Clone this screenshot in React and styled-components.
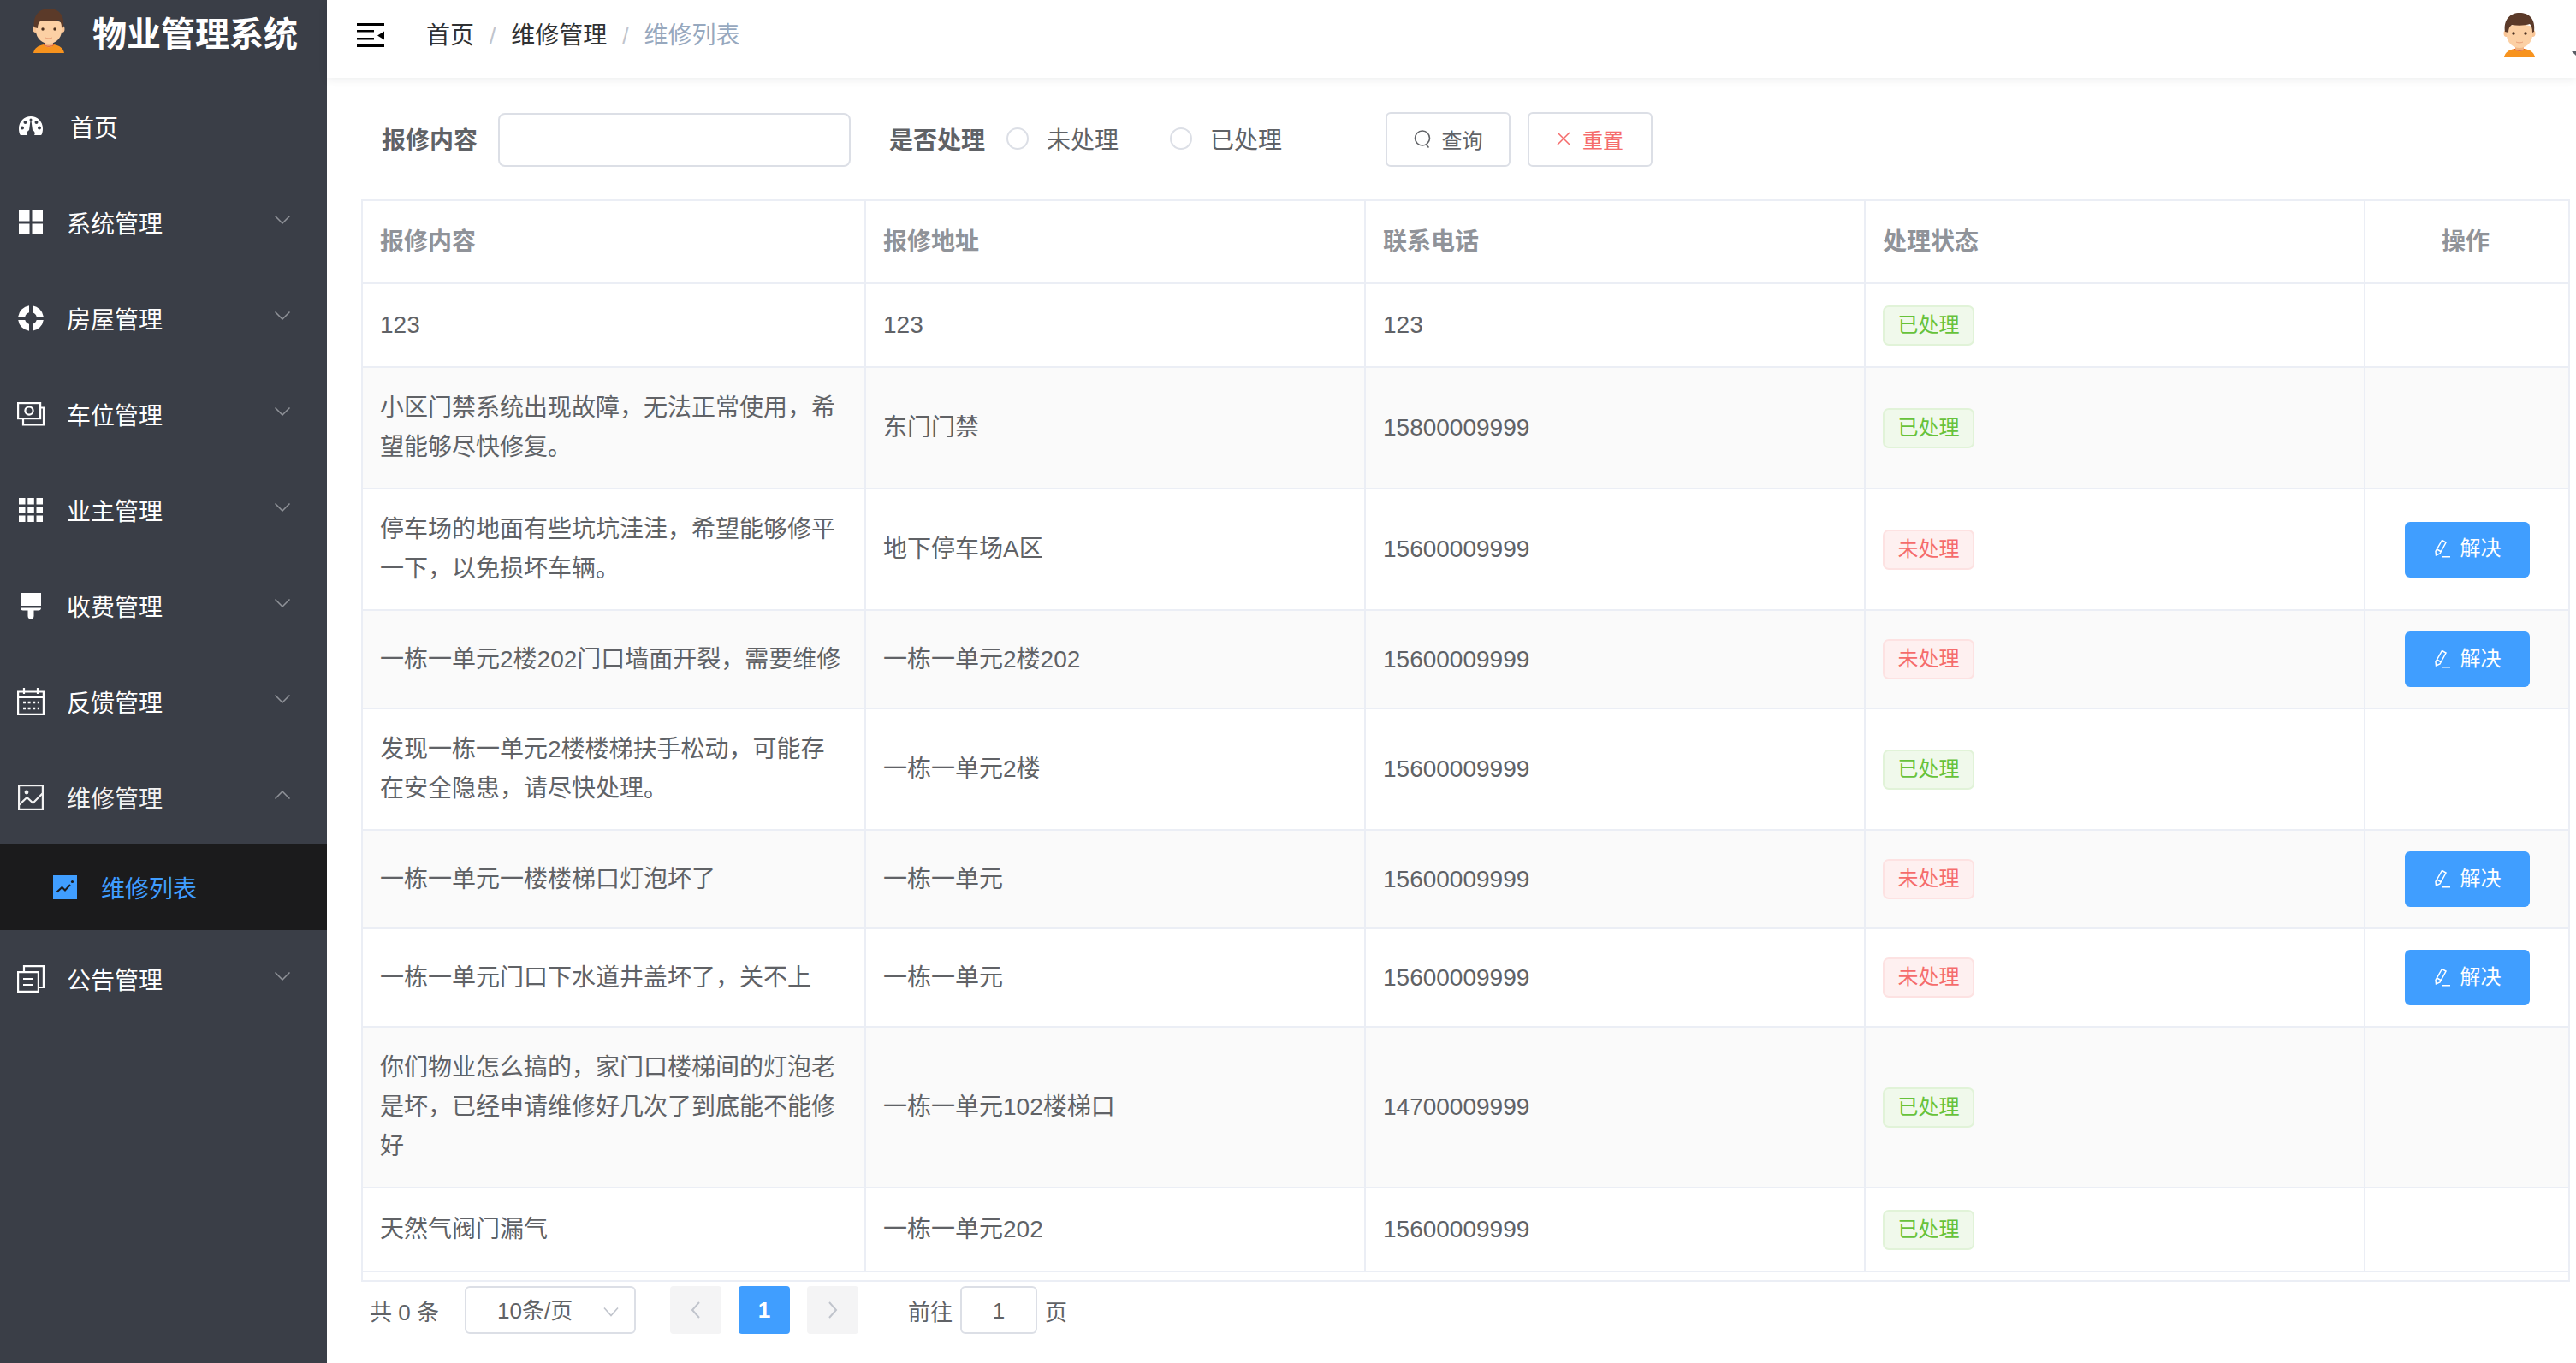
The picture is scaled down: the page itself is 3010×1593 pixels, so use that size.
import React from 'react';
import styled, { createGlobalStyle } from 'styled-components';

const GlobalStyle = createGlobalStyle`
    html, body, #root {
        margin: 0;
        height: 100%;
        overflow: hidden;
        background: #fff;
    }
    body {
        font-family: "Liberation Sans", "Noto Sans CJK SC", sans-serif;
    }
`;

const menuItems = [
    { label: '系统管理', icon: 'windows' },
    { label: '房屋管理', icon: 'ring' },
    { label: '车位管理', icon: 'money' },
    { label: '业主管理', icon: 'grid' },
    { label: '收费管理', icon: 'brush' },
    { label: '反馈管理', icon: 'date' },
    { label: '维修管理', icon: 'picture', open: true },
];

const rows = [
    { content: '123', address: '123', phone: '123', done: true },
    { content: '小区门禁系统出现故障，无法正常使用，希望能够尽快修复。', address: '东门门禁', phone: '15800009999', done: true },
    { content: '停车场的地面有些坑坑洼洼，希望能够修平一下，以免损坏车辆。', address: '地下停车场A区', phone: '15600009999', done: false },
    { content: '一栋一单元2楼202门口墙面开裂，需要维修', address: '一栋一单元2楼202', phone: '15600009999', done: false },
    { content: '发现一栋一单元2楼楼梯扶手松动，可能存在安全隐患，请尽快处理。', address: '一栋一单元2楼', phone: '15600009999', done: true },
    { content: '一栋一单元一楼楼梯口灯泡坏了', address: '一栋一单元', phone: '15600009999', done: false },
    { content: '一栋一单元门口下水道井盖坏了，关不上', address: '一栋一单元', phone: '15600009999', done: false },
    { content: '你们物业怎么搞的，家门口楼梯间的灯泡老是坏，已经申请维修好几次了到底能不能修好', address: '一栋一单元102楼梯口', phone: '14700009999', done: true },
    { content: '天然气阀门漏气', address: '一栋一单元202', phone: '15600009999', done: true },
];

const Avatar = ({ className }) => (
    <svg className={className} viewBox="0 0 38 52">
        <path d="M1 52c1-6 6-9 12-10h12c6 1 11 4 12 10z" fill="#f7931e" />
        <path d="M14 38h10v5c-2 3-8 3-10 0z" fill="#f2b582" />
        <path d="M13 42c2 3 10 3 12 0" fill="none" stroke="#e0562a" strokeWidth="1" />
        <ellipse cx="3.5" cy="24" rx="3" ry="4" fill="#f9c596" />
        <ellipse cx="34.5" cy="24" rx="3" ry="4" fill="#f9c596" />
        <path d="M4 18c0-6 30-6 30 0v8c0 9-8 15-15 15S4 35 4 26z" fill="#fcd0a4" />
        <path d="M2 22C0 8 8 0 19 0s19 7 17 22l-2 1c0-5-1-8-3-10-6 2-14 2-21 1-3 2-4 5-4 9z" fill="#5b3a29" />
        <circle cx="12" cy="24" r="1.7" fill="#4a3020" />
        <circle cx="26" cy="24" r="1.7" fill="#4a3020" />
        <path d="M15 34c2 1.2 6 1.2 8 0" fill="none" stroke="#e89f78" strokeWidth="1" />
    </svg>
);

const MenuIcon = ({ name }) => {
    switch (name) {
        case 'gauge':
            return (
                <svg viewBox="0 0 28 24" width="28" height="24">
                    <path fillRule="evenodd" fill="#fff" d="M14 0C6.300 0 0 6.200 0 14c0 3 .4 5.500 1.300 7.300.2.500.6.700 1.100.7h7.800c-.5-.7-.7-1.400-.7-2.200 0-1.700 1-3 2.500-3.600L13.400 6h1.200l1.400 10.200c1.500.6 2.700 1.900 2.700 3.600 0 .8-.3 1.500-.7 2.200h7.600c.5 0 .9-.2 1.100-.7C27.600 19.500 28 17 28 14 28 6.200 21.700 0 14 0zM4 15.500a2 2 0 1 1 0-4 2 2 0 0 1 0 4zm3.500-6.500a2 2 0 1 1 0-4 2 2 0 0 1 0 4zm13 0a2 2 0 1 1 0-4 2 2 0 0 1 0 4zm3.500 6.500a2 2 0 1 1 0-4 2 2 0 0 1 0 4zM12.500 4a1.500 1.500 0 1 1 3 0 1.500 1.500 0 0 1-3 0z" />
                </svg>
            );
        case 'windows':
            return (
                <svg viewBox="0 0 28 28" width="28" height="28">
                    <path fill="#fff" d="M0 0h12.500v12.500H0zM15.500 0H28v12.500H15.500zM0 15.500h12.500V28H0zM15.500 15.500H28V28H15.500z" />
                </svg>
            );
        case 'ring':
            return (
                <svg viewBox="0 0 30 30" width="30" height="30">
                    <path fillRule="evenodd" fill="#fff" d="M13 .2V8.300A7 7 0 0 0 8.300 13H.2A15 15 0 0 1 13 .2zM17 .2A15 15 0 0 1 29.800 13H21.700A7 7 0 0 0 17 8.300zM.2 17H8.300A7 7 0 0 0 13 21.700V29.800A15 15 0 0 1 .2 17zM21.700 17H29.800A15 15 0 0 1 17 29.800V21.700A7 7 0 0 0 21.700 17z" />
                </svg>
            );
        case 'money':
            return (
                <svg viewBox="0 0 32 28" width="32" height="28" fill="none" stroke="#fff" strokeWidth="2.200">
                    <rect x="1.100" y="1.100" width="26" height="18" />
                    <path d="M27 6.500h4v20H7v-7" />
                    <circle cx="14" cy="10" r="4.600" />
                </svg>
            );
        case 'grid':
            return (
                <svg viewBox="0 0 28 28" width="28" height="28">
                    <path fill="#fff" d="M0 0h7.500v7.500H0zM10.300 0h7.500v7.500h-7.500zM20.500 0H28v7.500h-7.500zM0 10.300h7.500v7.500H0zM10.300 10.300h7.500v7.500h-7.500zM20.500 10.300H28v7.500h-7.500zM0 20.500h7.500V28H0zM10.300 20.500h7.500V28h-7.500zM20.500 20.500H28V28h-7.500z" />
                </svg>
            );
        case 'brush':
            return (
                <svg viewBox="0 0 24 30" width="24" height="30">
                    <path fill="#fff" d="M0 0h24v15H0zM0 17.500h24c0 2-1.200 3-3 3h-5.500v6.500a3.500 3.500 0 0 1-7 0v-6.500H3c-1.800 0-3-1-3-3z" />
                </svg>
            );
        case 'date':
            return (
                <svg viewBox="0 0 32 32" width="32" height="32" fill="none" stroke="#fff" strokeWidth="2.200">
                    <path d="M1.100 4.500h29.800v26.400H1.100zM1.100 11h29.800M8 0v7M24 0v7" />
                    <path strokeDasharray="3 2.600" strokeWidth="2.600" d="M7 17h18.500M7 24h18.500" />
                </svg>
            );
        case 'picture':
            return (
                <svg viewBox="0 0 30 30" width="30" height="30" fill="none" stroke="#f2f2f2" strokeWidth="2.200">
                    <rect x="1.100" y="1.100" width="27.800" height="27.800" />
                    <path d="M1.500 23.500 10.500 15l7 6.500 11-11" />
                    <circle cx="10" cy="9" r="2.400" fill="#f2f2f2" stroke="none" />
                </svg>
            );
        case 'marketing':
            return (
                <svg viewBox="0 0 28 28" width="28" height="28">
                    <rect width="28" height="28" fill="#409eff" />
                    <path d="M4.500 19.500 10.500 14l3.500 3.500 6-6.500" fill="none" stroke="#1b1b1c" strokeWidth="2" />
                    <circle cx="22.500" cy="7.500" r="1.600" fill="#1b1b1c" />
                </svg>
            );
        case 'copy':
        default:
            return (
                <svg viewBox="0 0 32 32" width="32" height="32" fill="none" stroke="#fff" strokeWidth="2.200">
                    <path d="M1.100 8.100h23.800v22.800H1.100zM8 8V1.100h22.900V26H25" />
                    <path d="M7 16h12M7 23h12" />
                </svg>
            );
    }
};

const Chevron = ({ up }) => (
    <ChevronMark viewBox="0 0 18 10">
        <path d={up ? 'M0.500 9.500 9 1l8.500 8.500' : 'M0.500 .5 9 9l8.500-8.500'} fill="none" stroke="#909399" strokeWidth="1.500" />
    </ChevronMark>
);

const SearchIcon = () => (
    <svg viewBox="0 0 20 21" width="20" height="21" fill="none" stroke="#606266" strokeWidth="1.600">
        <circle cx="10" cy="9.500" r="8.500" />
        <path d="m14.500 17 3 3.500" />
    </svg>
);

const CloseIcon = () => (
    <svg viewBox="0 0 16 16" width="16" height="16" fill="none" stroke="#f56c6c" strokeWidth="1.500">
        <path d="m1 1 14 14M15 1 1 15" />
    </svg>
);

const EditIcon = () => (
    <svg viewBox="0 0 20 22" width="20" height="22" fill="none" stroke="#fff" strokeWidth="1.500">
        <path d="M9.500 1.500 14 4 7 17l-4.500 2-.5-4.500zM3.500 12l4.500 2.500M9 20.800h10" />
    </svg>
);

const Hamburger = () => (
    <svg viewBox="0 0 32 28" width="32" height="28">
        <path fill="#000" d="M0 0h32v3H0zM0 8h20v2.500H0zM0 17h20v2.500H0zM0 25h32v3H0zM32 9.500v10l-8-5z" />
    </svg>
);

const App = () => (
    <React.Fragment>
        <GlobalStyle />
        <Page>
            <Sidebar>
                <Logo>
                    <LogoAvatar />
                    <LogoTitle>物业管理系统</LogoTitle>
                </Logo>
                <MenuRow>
                    <IconSlot><MenuIcon name="gauge" /></IconSlot>
                    <HomeLabel>首页</HomeLabel>
                </MenuRow>
                { menuItems.map(item => (
                    <MenuRow key={ item.label }>
                        <IconSlot><MenuIcon name={ item.icon } /></IconSlot>
                        <MenuLabel dim={ item.open }>{ item.label }</MenuLabel>
                        <Chevron up={ item.open } />
                    </MenuRow>
                )) }
                <SubRow>
                    <MenuIcon name="marketing" />
                    <SubLabel>维修列表</SubLabel>
                </SubRow>
                <MenuRow>
                    <IconSlot><MenuIcon name="copy" /></IconSlot>
                    <MenuLabel>公告管理</MenuLabel>
                    <Chevron />
                </MenuRow>
            </Sidebar>
            <Main>
                <TopBar>
                    <Hamburger />
                    <Breadcrumb>
                        <span>首页</span>
                        <Slash>/</Slash>
                        <span>维修管理</span>
                        <Slash>/</Slash>
                        <Current>维修列表</Current>
                    </Breadcrumb>
                    <UserBox>
                        <UserAvatar />
                        <Caret />
                    </UserBox>
                </TopBar>
                <Content>
                    <SearchForm>
                        <FieldLabel>报修内容</FieldLabel>
                        <SearchInput />
                        <StatusLabel>是否处理</StatusLabel>
                        <Radio><Dot />未处理</Radio>
                        <Radio><Dot />已处理</Radio>
                        <PlainButton><SearchIcon />查询</PlainButton>
                        <ResetButton><CloseIcon />重置</ResetButton>
                    </SearchForm>
                    <TableBox>
                        <Table>
                            <colgroup>
                                <col style={ { width: 588 } } />
                                <col style={ { width: 584 } } />
                                <col style={ { width: 584 } } />
                                <col style={ { width: 584 } } />
                                <col style={ { width: 237 } } />
                            </colgroup>
                            <thead>
                                <tr>
                                    <Th>报修内容</Th>
                                    <Th>报修地址</Th>
                                    <Th>联系电话</Th>
                                    <Th>处理状态</Th>
                                    <Th center>操作</Th>
                                </tr>
                            </thead>
                            <tbody>
                                { rows.map((row, i) => (
                                    <Tr key={ i }>
                                        <Td>{ row.content }</Td>
                                        <Td>{ row.address }</Td>
                                        <Td>{ row.phone }</Td>
                                        <Td><TagLine><Tag done={ row.done }>{ row.done ? '已处理' : '未处理' }</Tag></TagLine></Td>
                                        <Td center>
                                            { !row.done ? <SolveButton><EditIcon />解决</SolveButton> : '' }
                                        </Td>
                                    </Tr>
                                )) }
                            </tbody>
                        </Table>
                    </TableBox>
                    <Pagination>
                        <Total>共 0 条</Total>
                        <SizeSelect>
                            10条/页
                            <SelectArrow viewBox="0 0 18 12">
                                <path d="M1 1.500 9 10.500l8-9" fill="none" stroke="#c0c4cc" strokeWidth="1.600" />
                            </SelectArrow>
                        </SizeSelect>
                        <PrevButton>
                            <svg viewBox="0 0 12 20" width="12" height="20"><path d="M10 1 2 10l8 9" fill="none" stroke="#c0c4cc" strokeWidth="2" /></svg>
                        </PrevButton>
                        <ActivePage>1</ActivePage>
                        <PageButton>
                            <svg viewBox="0 0 12 20" width="12" height="20"><path d="m2 1 8 9-8 9" fill="none" stroke="#c0c4cc" strokeWidth="2" /></svg>
                        </PageButton>
                        <JumpText>前往</JumpText>
                        <JumpInput>1</JumpInput>
                        <PageWord>页</PageWord>
                    </Pagination>
                </Content>
            </Main>
        </Page>
    </React.Fragment>
);

export default App;

const Page = styled.div`
    display: grid;
    grid-template-columns: 382px 1fr;
    height: 100%;
`;
const Sidebar = styled.aside`
    background: #3a3e47;
    display: flex;
    flex-direction: column;
`;
const Logo = styled.div`
    height: 91px;
    display: flex;
    align-items: flex-start;
    padding: 10px 0 0 38px;
    box-sizing: border-box;
`;
const LogoAvatar = styled(Avatar)`
    width: 38px;
    height: 52px;
`;
const LogoTitle = styled.div`
    margin: 0 0 0 32px;
    color: #fff;
    font-size: 40px;
    line-height: 60px;
    font-weight: 700;
    white-space: nowrap;
`;
const MenuRow = styled.div`
    height: 112px;
    box-sizing: border-box;
    flex: none;
    display: flex;
    align-items: center;
    position: relative;
    padding: 2px 0 0 20px;
`;
const IconSlot = styled.div`
    width: 32px;
    height: 32px;
    display: flex;
    align-items: center;
    justify-content: center;
`;
const MenuLabel = styled.span`
    margin-left: 26px;
    color: ${props => props.dim ? '#f2f2f2' : '#fff'};
    font-size: 28px;
`;
const HomeLabel = styled(MenuLabel)`
    margin-left: 30px;
`;
const ChevronMark = styled.svg`
    position: absolute;
    left: 321px;
    top: 49px;
    width: 18px;
    height: 10px;
`;
const SubRow = styled.div`
    height: 100px;
    flex: none;
    background: #1b1b1c;
    display: flex;
    align-items: center;
    padding-left: 62px;
`;
const SubLabel = styled.span`
    margin-left: 28px;
    color: #409eff;
    font-size: 28px;
`;
const Main = styled.main`
    min-width: 0;
`;
const TopBar = styled.header`
    height: 91px;
    display: flex;
    align-items: center;
    padding: 0 0 0 35px;
    background: #fff;
    box-shadow: 0 2px 10px rgba(0, 21, 41, 0.08);
    position: relative;
    svg {
        flex: none;
        margin-top: -10px;
    }
`;
const Breadcrumb = styled.nav`
    margin: -7px 0 0 49px;
    display: flex;
    font-size: 28px;
    line-height: 40px;
    color: #303133;
`;
const Slash = styled.span`
    margin: 0 18px;
    color: #c0c4cc;
    font-size: 26px;
`;
const Current = styled.span`
    color: #97a8be;
`;
const UserBox = styled.div`
    margin-left: auto;
    margin-right: 47px;
    position: relative;
    height: 52px;
    margin-top: -10px;
`;
const UserAvatar = styled(Avatar)`
    width: 38px;
    height: 52px;
    margin: 0 !important;
`;
const Caret = styled.i`
    position: absolute;
    left: 80px;
    top: 45px;
    border-left: 12px solid transparent;
    border-right: 12px solid transparent;
    border-top: 12px solid #5a5e66;
`;
const Content = styled.section`
    padding: 40px 7px 0 40px;
`;
const SearchForm = styled.form`
    display: flex;
    align-items: center;
    height: 64px;
    padding-left: 24px;
    margin-bottom: 38px;
    color: #606266;
    font-size: 28px;
`;
const FieldLabel = styled.label`
    font-weight: 700;
    margin: 0 24px 2px 0;
`;
const SearchInput = styled.input`
    width: 412px;
    height: 63px;
    box-sizing: border-box;
    border: 2px solid #dcdfe6;
    border-radius: 8px;
    background: #fff;
`;
const StatusLabel = styled(FieldLabel)`
    margin: 0 23px 2px 45px;
`;
const Radio = styled.label`
    display: flex;
    align-items: center;
    width: 191px;
    margin-bottom: 2px;
`;
const Dot = styled.i`
    width: 26px;
    height: 26px;
    box-sizing: border-box;
    border: 2px solid #dcdfe6;
    border-radius: 50%;
    margin: 0 21px 0 2px;
`;
const PlainButton = styled.button`
    width: 146px;
    height: 64px;
    box-sizing: border-box;
    margin-left: 63px;
    border: 2px solid #dcdfe6;
    border-radius: 6px;
    background: #fff;
    color: #606266;
    font: inherit;
    font-size: 24px;
    display: flex;
    align-items: center;
    justify-content: center;
    gap: 13px;
    padding: 0 0 2px;
`;
const ResetButton = styled(PlainButton)`
    margin-left: 20px;
    color: #f56c6c;
    gap: 14px;
`;
const TableBox = styled.div`
    box-sizing: border-box;
    height: 1265px;
    border: 2px solid #ebeef5;
    overflow: hidden;
`;
const Table = styled.table`
    width: 2577px;
    table-layout: fixed;
    border-collapse: separate;
    border-spacing: 0;
    font-size: 28px;
    line-height: 46px;
    color: #606266;
`;
const Th = styled.th`
    padding: 25px 23px 24px 20px;
    text-align: ${props => props.center ? 'center' : 'left'};
    font-weight: 700;
    color: #909399;
    border-right: 2px solid #ebeef5;
    border-bottom: 2px solid #ebeef5;
    &:last-child {
        border-right: 0;
    }
`;
const Tr = styled.tr`
    &:nth-child(even) td {
        background: #fafafa;
    }
`;
const Td = styled.td`
    padding: 24px 23px 24px 20px;
    text-align: ${props => props.center ? 'center' : 'left'};
    vertical-align: middle;
    border-right: 2px solid #ebeef5;
    border-bottom: 2px solid #ebeef5;
    word-break: break-all;
    &:last-child {
        border-right: 0;
        padding: 24px 0 24px 1px;
    }
`;
const TagLine = styled.div`
    display: flex;
    align-items: center;
    min-height: 48px;
`;
const Tag = styled.span`
    display: block;
    width: 107px;
    height: 47px;
    box-sizing: border-box;
    border: 2px solid ${props => props.done ? '#e1f3d8' : '#fde2e2'};
    border-radius: 7px;
    background: ${props => props.done ? '#f0f9eb' : '#fef0f0'};
    color: ${props => props.done ? '#67c23a' : '#f56c6c'};
    font-size: 24px;
    line-height: 41px;
    text-align: center;
`;
const SolveButton = styled.button`
    width: 146px;
    height: 65px;
    border: 0;
    border-radius: 6px;
    background: #409eff;
    color: #fff;
    font: inherit;
    font-size: 24px;
    display: inline-flex;
    align-items: center;
    justify-content: center;
    gap: 11px;
    padding: 0 0 2px;
    vertical-align: middle;
`;
const Pagination = styled.div`
    display: flex;
    align-items: center;
    height: 56px;
    margin-top: 5px;
    padding-left: 10px;
    color: #606266;
    font-size: 26px;
`;
const Total = styled.span`
    width: 111px;
    white-space: nowrap;
`;
const SizeSelect = styled.div`
    position: relative;
    width: 200px;
    height: 56px;
    box-sizing: border-box;
    border: 2px solid #dcdfe6;
    border-radius: 6px;
    padding-left: 36px;
    line-height: 54px;
`;
const SelectArrow = styled.svg`
    position: absolute;
    right: 18px;
    top: 22px;
    width: 18px;
    height: 12px;
`;
const PageButton = styled.div`
    width: 60px;
    height: 56px;
    margin-left: 20px;
    border-radius: 4px;
    background: #f4f4f5;
    display: flex;
    align-items: center;
    justify-content: center;
`;
const PrevButton = styled(PageButton)`
    margin-left: 40px;
`;
const ActivePage = styled(PageButton)`
    background: #409eff;
    color: #fff;
    font-weight: 700;
`;
const JumpText = styled.span`
    margin-left: 58px;
`;
const JumpInput = styled.div`
    width: 90px;
    height: 56px;
    box-sizing: border-box;
    margin-left: 9px;
    border: 2px solid #dcdfe6;
    border-radius: 6px;
    text-align: center;
    line-height: 54px;
`;
const PageWord = styled.span`
    margin-left: 9px;
`;
